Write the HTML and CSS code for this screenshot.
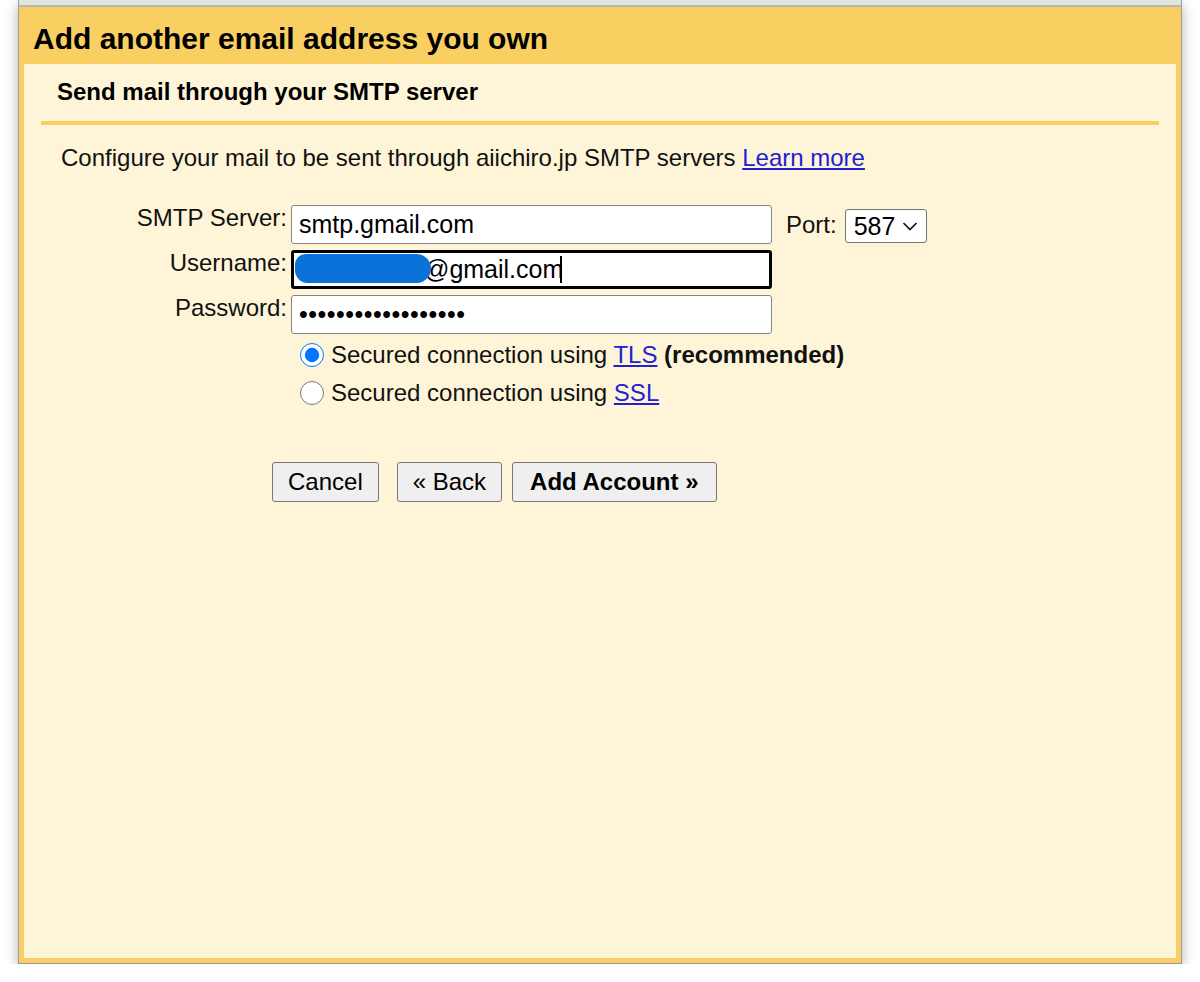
FILE: index.html
```html
<!DOCTYPE html>
<html lang="en">
<head>
    <meta charset="UTF-8">
    <title>Add another email address you own</title>
    <link rel="stylesheet" href="styles.css">
</head>
<body>
    <div class="window">
        <div class="topbar"></div>
        <div class="dialog">
            <h1>Add another email address you own</h1>
            <div class="panel">
                <h2>Send mail through your SMTP server</h2>

                <p class="intro">Configure your mail to be sent through aiichiro.jp SMTP servers <a href="#">Learn more</a></p>

                <!-- SMTP settings -->
                <div class="fields">
                    <label for="server">SMTP Server:</label>
                    <div class="row">
                        <input type="text" id="server" value="smtp.gmail.com">
                        <label for="port" class="port-label">Port:</label>
                        <div class="select-wrap">
                            <select id="port">
                                <option>587</option>
                                <option>465</option>
                            </select>
                            <svg class="chevron" width="16" height="10" viewBox="0 0 16 10"><path d="M1.5 2 L8 8.5 L14.5 2" fill="none" stroke="#111" stroke-width="1.7"/></svg>
                        </div>
                    </div>

                    <label for="username">Username:</label>
                    <div class="row">
                        <div class="masked">
                            <input type="text" id="username" class="focused" value="xxxxxxxxxx@gmail.com">
                            <span class="blob"></span>
                            <span class="caret"></span>
                        </div>
                    </div>

                    <label for="password">Password:</label>
                    <div class="row">
                        <input type="password" id="password" value="abcdefghijklmnopqr">
                    </div>

                    <div></div>
                    <div class="options">
                        <label class="radio"><input type="radio" name="security" checked>Secured connection using <a href="#">TLS</a> <b>(recommended)</b></label>
                        <label class="radio"><input type="radio" name="security">Secured connection using <a href="#">SSL</a></label>
                    </div>
                </div>

                <div class="buttons">
                    <button type="button">Cancel</button>
                    <button type="button" class="back">&laquo; Back</button>
                    <button type="button" class="primary">Add Account &raquo;</button>
                </div>
            </div>
        </div>
    </div>
</body>
</html>
```

FILE: styles.css
```css
/* General styles */
* {
    margin: 0;
    padding: 0;
    box-sizing: border-box;
    font-family: 'Liberation Sans', Arial, sans-serif;
}

body {
    background: #fff;
    color: #111;
}

.window {
    width: 1164px;
    margin: 0 18px;
    border: 1px solid #9b9b9b;
    border-top: none;
    box-shadow: 0 5px 12px rgba(0, 0, 0, 0.3);
}

.topbar {
    height: 7px;
    background: #dfe6dc;
    border-bottom: 2px solid #b3bab0;
}

.dialog {
    background: #f9cf62;
    padding: 0 5px 5px;
}

h1 {
    font-size: 30px;
    font-weight: bold;
    color: #000;
    height: 57px;
    line-height: 48px;
    padding: 8px 0 0 9px;
}

.panel {
    background: #fef5d8;
    height: 894px;
    padding: 0 17px;
}

h2 {
    font-size: 24px;
    font-weight: bold;
    color: #000;
    padding: 14px 16px 15px;
    border-bottom: 4px solid #f9cf62;
}

.intro {
    font-size: 24px;
    padding: 19px 0 0 20px;
}

a {
    color: #2121d4;
}

.fields {
    display: grid;
    grid-template-columns: 246px auto;
    column-gap: 4px;
    row-gap: 6px;
    margin-top: 33px;
}

.fields > label {
    font-size: 24px;
    text-align: right;
    margin-top: -1px;
}

.row {
    display: flex;
    align-items: center;
}

input[type="text"],
input[type="password"] {
    width: 481px;
    height: 39px;
    padding: 0 7px;
    font-size: 25px;
    background: #fff;
    border: 1px solid #858585;
    border-radius: 3px;
    color: #000;
}

input[type="password"] {
    letter-spacing: 0.5px;
}

input.focused {
    border: 3px solid #000;
    padding-left: 5px;
    outline: none;
}

.masked {
    position: relative;
}

.blob {
    position: absolute;
    left: 4px;
    top: 4px;
    width: 136px;
    height: 29px;
    background: #0b72da;
    border-radius: 12px 16px 16px 14px;
}

.caret {
    position: absolute;
    left: 269px;
    top: 6px;
    width: 1.5px;
    height: 27px;
    background: #000;
}

.port-label {
    font-size: 24px;
    margin: 0 8px 0 14px;
}

.select-wrap {
    position: relative;
    margin-top: 2px;
}

select {
    appearance: none;
    width: 82px;
    height: 34px;
    font-size: 25px;
    padding: 0 0 0 8px;
    background: #fff;
    border: 1px solid #767676;
    border-radius: 3px;
    color: #000;
}

.chevron {
    position: absolute;
    right: 9px;
    top: 12px;
    pointer-events: none;
}

.options {
    display: flex;
    flex-direction: column;
    gap: 12px;
    margin-top: 2px;
}

.radio {
    font-size: 24px;
    display: block;
    line-height: 26px;
}

.radio input {
    width: 24px;
    height: 24px;
    margin: 0 7px 0 9px;
    vertical-align: -4px;
}

.buttons {
    display: flex;
    margin: 56px 0 0 231px;
}

button {
    font-size: 24px;
    height: 40px;
    padding: 0 15px;
    background: #efefef;
    border: 1px solid #767676;
    border-radius: 3px;
    color: #000;
}

button.back {
    margin: 0 10px 0 18px;
}

button.primary {
    font-weight: bold;
    padding: 0 17px;
}
```
